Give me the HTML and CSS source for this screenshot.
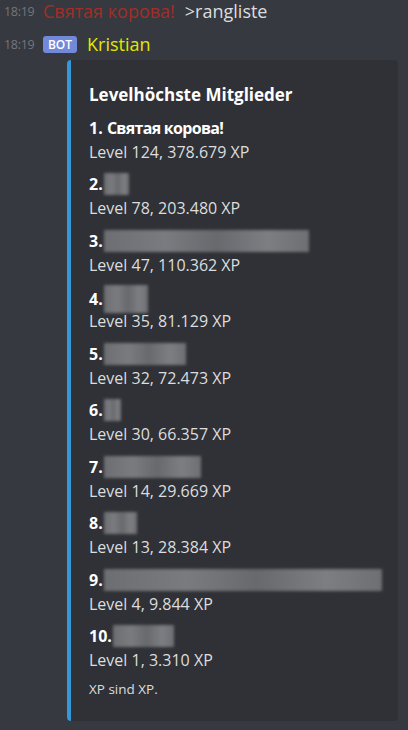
FILE: index.html
```html
<!DOCTYPE html>
<html lang="de">
<head>
<meta charset="utf-8">
<link rel="stylesheet" href="styles.css">
</head>
<body>
<div class="row row-first">
  <span class="time">18:19</span>
  <span class="user user-red">Святая корова!</span>
  <span class="content">&gt;rangliste</span>
</div>
<div class="row row-second">
  <span class="time">18:19</span>
  <span class="bot">BOT</span>
  <span class="user user-yellow">Kristian</span>
</div>
<div class="embed">
  <div class="title">Levelhöchste Mitglieder</div>
  <div class="entry"><div class="name">1. <span class="cyr">Святая корова!</span></div><div class="level">Level 124, 378.679 XP</div></div>
  <div class="entry"><div class="name">2.<span class="blur" style="width:25px"></span></div><div class="level">Level 78, 203.480 XP</div></div>
  <div class="entry"><div class="name">3.<span class="blur" style="width:205px"></span></div><div class="level">Level 47, 110.362 XP</div></div>
  <div class="entry"><div class="name">4.<span class="blur tall" style="width:44px"></span></div><div class="level">Level 35, 81.129 XP</div></div>
  <div class="entry"><div class="name">5.<span class="blur" style="width:82px"></span></div><div class="level">Level 32, 72.473 XP</div></div>
  <div class="entry"><div class="name">6.<span class="blur" style="width:17px"></span></div><div class="level">Level 30, 66.357 XP</div></div>
  <div class="entry"><div class="name">7.<span class="blur" style="width:97px"></span></div><div class="level">Level 14, 29.669 XP</div></div>
  <div class="entry"><div class="name">8.<span class="blur" style="width:33px"></span></div><div class="level">Level 13, 28.384 XP</div></div>
  <div class="entry"><div class="name">9.<span class="blur" style="width:278px"></span></div><div class="level">Level 4, 9.844 XP</div></div>
  <div class="entry"><div class="name">10.<span class="blur" style="width:61px"></span></div><div class="level">Level 1, 3.310 XP</div></div>
  <div class="footer">XP sind XP.</div>
</div>
</body>
</html>
```

FILE: styles.css
```css
html, body {
  margin: 0;
  padding: 0;
  background: #36393f;
}
body {
  font-family: "Open Sans", "Noto Sans", sans-serif;
  color: #dcddde;
  width: 408px;
  height: 730px;
  overflow: hidden;
}
.row {
  display: flex;
  align-items: center;
  height: 22px;
  white-space: nowrap;
}
.row-first {
  margin-top: 0;
}
.row-second {
  margin-top: 11px;
}
.time {
  width: 39px;
  padding-left: 4px;
  font-size: 12.5px;
  color: #72767d;
  letter-spacing: -0.3px;
}
.user {
  font-size: 18px;
  font-weight: 500;
}
.user-red {
  color: #a12f27;
  margin-right: 10px;
}
.user-yellow {
  color: #e4e600;
}
.content {
  font-size: 18px;
  color: #dcddde;
}
.bot {
  display: inline-flex;
  align-items: center;
  justify-content: center;
  width: 34px;
  height: 17px;
  border-radius: 3px;
  background: #7289da;
  color: #fff;
  font-size: 12px;
  font-weight: 600;
  margin-right: 10px;
}
.embed {
  margin: 5px 10px 0 67px;
  height: 661px;
  box-sizing: border-box;
  background: #2f3136;
  border-left: 4px solid #3498db;
  border-radius: 4px;
  padding: 23px 12px 0 18px;
}
.title {
  font-size: 17px;
  font-weight: 700;
  color: #ffffff;
  line-height: 24px;
  margin-bottom: 9px;
}
.entry {
  margin-bottom: 8.44px;
}
.name {
  font-size: 16px;
  font-weight: 700;
  color: #ffffff;
  line-height: 24px;
  height: 24px;
  white-space: nowrap;
}
.cyr {
  letter-spacing: -0.7px;
}
.level {
  font-size: 16px;
  line-height: 24px;
  color: #dcddde;
}
.blur {
  display: inline-block;
  height: 22px;
  vertical-align: -5px;
  margin-left: 1px;
  background: linear-gradient(90deg, #6d6e72, #7a7b7e 30%, #68696c 55%, #7d7e81 80%, #6e6f72);
  filter: blur(1.5px);
}
.blur.tall {
  height: 28px;
  vertical-align: -8px;
}
.footer {
  font-size: 13.5px;
  line-height: 18px;
  color: #dcddde;
  margin-top: 3px;
}
```
